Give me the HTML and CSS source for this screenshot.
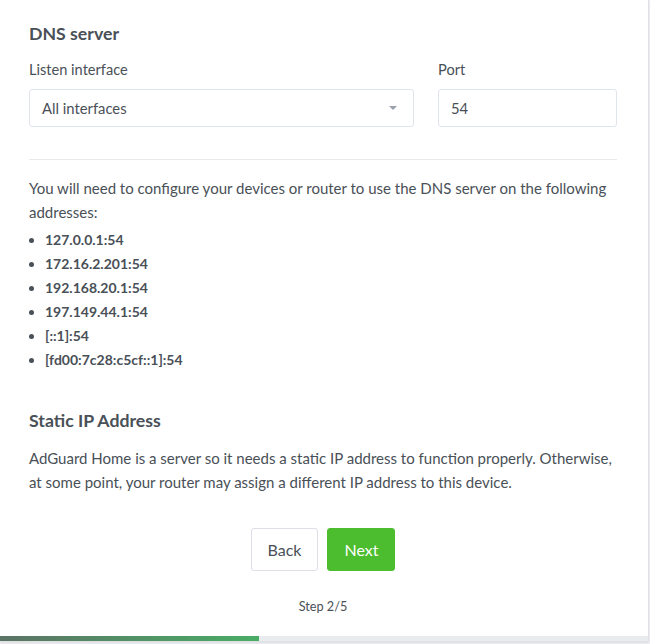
FILE: index.html
```html
<!DOCTYPE html>
<html lang="en">
<head>
<meta charset="utf-8">
<title>AdGuard Home setup</title>
<link rel="stylesheet" href="styles.css">
</head>
<body>
<div class="card">
  <div class="card-body">
    <h2 class="section-title">DNS server</h2>
    <div class="form-row">
      <div class="field field-wide">
        <label class="field-label">Listen interface</label>
        <div class="control select">
          <span>All interfaces</span>
          <span class="caret"></span>
        </div>
      </div>
      <div class="field field-narrow">
        <label class="field-label">Port</label>
        <div class="control">54</div>
      </div>
    </div>
    <hr class="divider">
    <p class="text">You will need to configure your devices or router to use the DNS server on the following addresses:</p>
    <ul class="addr-list">
      <li>127.0.0.1:54</li>
      <li>172.16.2.201:54</li>
      <li>192.168.20.1:54</li>
      <li>197.149.44.1:54</li>
      <li>[::1]:54</li>
      <li>[fd00:7c28:c5cf::1]:54</li>
    </ul>
    <h2 class="section-title section-title-2">Static IP Address</h2>
    <p class="text text-2">AdGuard Home is a server so it needs a static IP address to function properly. Otherwise, at some point, your router may assign a different IP address to this device.</p>
    <div class="actions">
      <button class="btn btn-secondary">Back</button>
      <button class="btn btn-success">Next</button>
    </div>
    <div class="step">Step 2/5</div>
  </div>
  <div class="progress"><div class="progress-bar" style="width: 40%"></div></div>
</div>
</body>
</html>
```

FILE: styles.css
```css
html, body {
  margin: 0;
  padding: 0;
}
body {
  background: #f0f1f4;
  font-family: "Lato", "Open Sans", sans-serif;
  color: #495057;
  width: 650px;
  height: 644px;
  overflow: hidden;
}
.card {
  width: 648px;
  background: #ffffff;
  border-right: 1px solid #dfe1e6;
  box-shadow: 0 2px 2px rgba(0,0,0,0.08);
}
.card-body {
  padding: 24px 31px 0 29px;
}
.section-title {
  margin: 0;
  font-size: 17.7px;
  font-weight: 700;
  line-height: 20px;
  color: #495057;
}
.form-row {
  display: flex;
  gap: 24px;
  margin-top: 16px;
}
.field-wide { width: 385px; }
.field-narrow { width: 179px; }
.field-label {
  display: block;
  font-size: 14.6px;
  line-height: 20px;
  margin-bottom: 9px;
}
.control {
  box-sizing: border-box;
  height: 38px;
  border: 1px solid #e0e5ec;
  border-radius: 3px;
  padding: 0 12px;
  display: flex;
  align-items: center;
  font-size: 14.8px;
  color: #495057;
}
.select {
  justify-content: space-between;
}
.caret {
  width: 0;
  height: 0;
  border-left: 4px solid transparent;
  border-right: 4px solid transparent;
  border-top: 4px solid #9aa0ac;
  margin-right: 4px;
}
.divider {
  border: 0;
  border-top: 1px solid #e6e8ec;
  margin: 32px 0 0 0;
}
.text {
  margin: 16px 0 0 0;
  font-size: 15px;
  line-height: 24px;
}
.addr-list {
  margin: 4px 0 0 0;
  padding-left: 16px;
  font-size: 14px;
  line-height: 24px;
  font-weight: 700;
}
.section-title-2 {
  margin-top: 39px;
}
.text-2 {
  margin-top: 15px;
}
.actions {
  display: flex;
  justify-content: center;
  gap: 9px;
  margin-top: 34px;
}
.btn {
  height: 43px;
  box-sizing: border-box;
  padding: 0 16px;
  font-family: inherit;
  font-size: 16px;
  border-radius: 3px;
  cursor: pointer;
}
.btn-secondary {
  background: #ffffff;
  border: 1px solid #dcdee8;
  color: #495057;
}
.btn-success {
  background: #4bbd2e;
  border: 1px solid #4bbd2e;
  color: #ffffff;
}
.step {
  margin-top: 25px;
  text-align: center;
  font-size: 12.7px;
  line-height: 20px;
}
.progress {
  margin-top: 20px;
  height: 5px;
  background: #e9ecef;
}
.progress-bar {
  height: 100%;
  background: linear-gradient(90deg, #5b7365, #49ad65);
}
```
